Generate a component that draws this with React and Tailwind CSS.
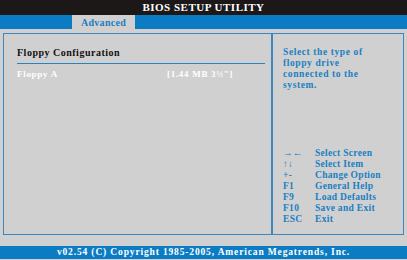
export default function App() {
  const serif = { fontFamily: '"Liberation Serif", "Times New Roman", serif' };
  const help = [
    ["\u2192\u2190", "Select Screen"],
    ["\u2191\u2193", "Select Item"],
    ["+-", "Change Option"],
    ["F1", "General Help"],
    ["F9", "Load Defaults"],
    ["F10", "Save and Exit"],
    ["ESC", "Exit"],
  ];
  return (
    <div className="w-[407px] h-[260px] flex flex-col bg-[#d0d0d0] font-bold" style={serif}>
      <div className="h-[15px] bg-[#1c1818] text-white text-[11px] leading-[15px] text-center tracking-[0.5px]">
        BIOS SETUP UTILITY
      </div>
      <div className="h-[14px] bg-[#0b7cc4] flex pl-[72px]">
        <div className="w-[63px] bg-[#d0d0d0] text-[#1b7fc2] text-[10px] leading-[15px] text-center tracking-[0.3px]">Advanced</div>
      </div>
      <div className="flex-1 flex pt-[4px] pb-[11px] px-[3px]">
        <div className="w-[270px] border border-[#3a87c2] border-r-[2px] pl-[13px] pr-[6px] pt-[12px]">
          <div className="text-[10px] leading-[13px] text-[#111] tracking-[0.5px]">Floppy Configuration</div>
          <div className="h-px bg-[#2a82c0] mt-[4px]" />
          <div className="flex text-white text-[9px] leading-[12px] mt-[4px] tracking-[0.7px]">
            <div className="w-[150px]">Floppy A</div>
            <div>[1.44 MB 3½"]</div>
          </div>
        </div>
        <div className="flex-1 border border-l-0 border-[#3a87c2] pl-[10px] pt-[13px] flex flex-col text-[#1b7fc2] text-[9.5px] leading-[11px] tracking-[0.6px]">
          <div>Select the type of<br />floppy drive<br />connected to the<br />system.</div>
          <div className="mt-auto mb-[9px] tracking-[0.3px]">
            {help.map(([k, d]) => (
              <div key={k} className="flex">
                <div className="w-[32px]">{k}</div>
                <div>{d}</div>
              </div>
            ))}
          </div>
        </div>
      </div>
      <div className="h-[13px] bg-[#0b7cc4] text-white text-[9.5px] leading-[13px] text-center mb-[1px] tracking-[0.85px]">
        v02.54 (C) Copyright 1985-2005, American Megatrends, Inc.
      </div>
    </div>
  );
}
